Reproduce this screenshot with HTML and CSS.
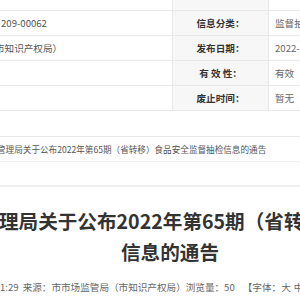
FILE: index.html
```
<!DOCTYPE html>
<html lang="zh-CN">
<head>
<meta charset="utf-8">
<link rel="stylesheet" href="styles.css">
</head>
<body>
<div class="info">
  <div class="cell val1"></div>
  <div class="cell label"></div>
  <div class="cell val2"></div>

  <div class="cell val1 first">209-00062</div>
  <div class="cell label">信息分类：</div>
  <div class="cell val2">监督抽检</div>

  <div class="cell val1 second">市知识产权局）</div>
  <div class="cell label">发布日期：</div>
  <div class="cell val2">2022-12-09</div>

  <div class="cell val1"></div>
  <div class="cell label">有&nbsp;效&nbsp;性：</div>
  <div class="cell val2">有效</div>

  <div class="cell val1"></div>
  <div class="cell label">废止时间：</div>
  <div class="cell val2">暂无</div>
</div>

<div class="crumb">管理局关于公布2022年第65期（省转移）食品安全监督抽检信息的通告</div>

<div class="article">
  <h1 class="title">
    <span class="line1">理局关于公布2022年第65期（省转移）食品安全监督抽检</span>
    <span class="line2">信息的通告</span>
  </h1>
  <div class="meta">
    <span class="time">1:29</span>
    <span class="source">来源：市市场监管局（市知识产权局）</span>
    <span class="views">浏览量：50</span>
    <span class="font">【字体：大<span class="sz">中</span></span>
  </div>
</div>
</body>
</html>
```
FILE: styles.css
```
html, body {
  margin: 0;
  padding: 0;
  background: #fff;
}
body {
  width: 300px;
  height: 300px;
  overflow: hidden;
  font-family: "Noto Sans CJK SC", "Noto Sans", sans-serif;
  font-size: 9.6px;
  color: #333;
}
.info {
  display: grid;
  grid-template-columns: 172px 97px 1fr;
  margin-top: -14px;
}
.cell {
  height: 24px;
  line-height: 24px;
  border-bottom: 1px solid #e8e8e8;
  white-space: nowrap;
  overflow: hidden;
}
.val1 {
  color: #555;
}
.first {
  padding-left: 1px;
}
.second {
  text-indent: -5px;
}
.label {
  background: #f7f7f7;
  border-left: 1px solid #e8e8e8;
  border-right: 1px solid #e8e8e8;
  text-align: center;
  font-weight: 700;
  color: #333;
}
.val2 {
  padding-left: 6px;
  color: #666;
}
.crumb {
  margin-top: 25px;
  height: 24px;
  line-height: 24px;
  font-size: 8.6px;
  border-top: 1px solid #e8e8e8;
  border-bottom: 1px solid #eeeeee;
  white-space: nowrap;
  overflow: hidden;
  text-indent: -3px;
  color: #555;
}
.article {
  margin-top: 23px;
  border-top: 2px solid #f0f0f0;
}
.title {
  width: 340px;
  margin: 18px 0 0;
  font-size: 19.6px;
  line-height: 31px;
  font-weight: 700;
  color: #333;
}
.line1 {
  display: block;
  white-space: nowrap;
  text-indent: -1px;
}
.line2 {
  display: block;
  text-align: center;
}
.meta {
  margin-top: 10px;
  line-height: 20px;
  white-space: nowrap;
  color: #666;
  display: flex;
}
.source {
  margin-left: 4px;
}
.font {
  margin-left: 8px;
}
.sz {
  margin-left: 3px;
}
```
